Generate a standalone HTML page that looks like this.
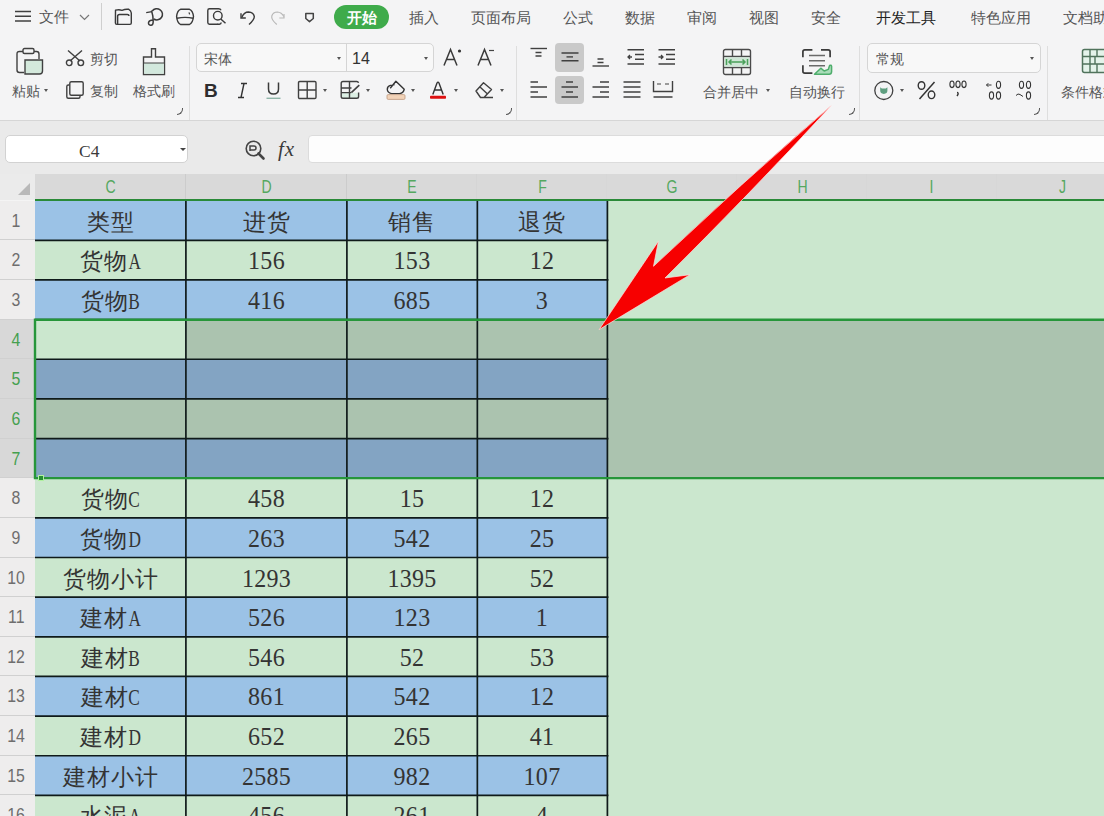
<!DOCTYPE html>
<html><head><meta charset="utf-8">
<style>
html,body{margin:0;padding:0;}
body{width:1104px;height:816px;overflow:hidden;position:relative;background:#f4f4f4;font-family:"Liberation Sans",sans-serif;}
.a{position:absolute;}
.t{position:absolute;white-space:nowrap;font-size:14.5px;line-height:16px;color:#555;}
svg{position:absolute;overflow:visible;}
#ribbon{position:absolute;left:0;top:0;width:1104px;height:120px;background:#f4f4f5;border-bottom:1px solid #d6d6d6;}
#fbar{position:absolute;left:0;top:121px;width:1104px;height:54px;background:#eaeaea;}
#namebox{position:absolute;left:5px;top:135px;width:183px;height:28px;background:#fff;border:1px solid #d2d2d2;border-radius:5px;box-sizing:border-box;}
#finput{position:absolute;left:308px;top:135px;width:800px;height:28px;background:#fdfdfd;border:1px solid #dcdcdc;border-radius:4px;box-sizing:border-box;}
#grid{position:absolute;left:0;top:0;width:1104px;height:816px;}
.cell{position:absolute;box-sizing:border-box;text-align:center;font-family:"Liberation Serif",serif;font-size:24px;color:#343434;line-height:40px;padding-top:1px;}
.hl{position:absolute;left:35px;width:573px;height:2px;background:#1c2a36;}
.vl{position:absolute;top:200px;height:640px;width:2px;background:#1c2a36;}
.rh{position:absolute;left:0;width:35px;background:#eeeded;text-align:center;font-size:18px;color:#6e6e6e;line-height:40px;box-sizing:border-box;padding-right:3px;}
.rh.sel{background:#d8d8d8;color:#45a04f;}
.rhl{position:absolute;left:0;width:35px;height:1px;background:#d0d0d0;}
.ch{position:absolute;top:174px;height:26px;background:#d9d9d9;text-align:center;font-size:18px;color:#55a85f;line-height:26px;}
.chl{position:absolute;top:175px;height:25px;width:1px;background:#c6c6c6;}
#corner{position:absolute;left:0;top:174px;width:35px;height:26px;background:#ebebeb;}
#selbox{position:absolute;left:35px;top:318px;width:1080px;height:161px;box-sizing:border-box;border:2px solid #2e9a3a;}
#hdrline{position:absolute;left:35px;top:199px;width:1069px;height:2px;background:#2f8a3c;}
.sep{position:absolute;width:1px;background:#dedede;}
.dd{position:absolute;width:0;height:0;border-left:3px solid transparent;border-right:3px solid transparent;border-top:3px solid #555;}
.launch{position:absolute;width:5px;height:6px;border-right:1.3px solid #555;border-bottom:1.3px solid #555;border-bottom-right-radius:6px;}
.cj{font-size:22.5px;letter-spacing:1px;}
.lt{display:inline-block;transform:scaleX(0.72);margin:0 -2.5px;}
.nm{display:inline-block;transform:scaleY(1.07);transform-origin:50% 78%;letter-spacing:0.3px;}
.chs{display:inline-block;transform:scaleX(0.78);}
.rhs{display:inline-block;transform:scaleX(0.88);}
</style></head><body>
<div id="ribbon"></div>
<!-- top row -->
<svg style="left:14px;top:10px" width="18" height="13"><path d="M1 1.5H17M1 6.3H17M1 11H17" stroke="#404040" stroke-width="1.4"/></svg>
<div class="t" style="left:39px;top:9px;font-size:15px">文件</div>
<svg style="left:79px;top:14px" width="11" height="7"><path d="M1 1L5.5 5.5L10 1" fill="none" stroke="#777" stroke-width="1.2"/></svg>
<div class="sep" style="left:101px;top:3px;height:27px;background:#cfcfcf"></div>
<svg style="left:113px;top:7px" width="20" height="19"><path d="M2.5 3.2Q6 2.2 9 3.3Q12.5 1.8 15.8 2.3Q18 3.5 18.3 6V16Q18.3 17.4 16.9 17.4H3.8Q2.4 17.4 2.4 16Z" fill="none" stroke="#3a3a3a" stroke-width="1.4" stroke-linejoin="round"/><path d="M4.6 17V9.3Q4.6 7.5 6.5 7.5H14.3Q16 7.5 16 9" fill="none" stroke="#3a3a3a" stroke-width="1.5"/></svg>
<svg style="left:145px;top:8px" width="20" height="19"><path d="M1.2 4.6L7 3.6" stroke="#3a3a3a" stroke-width="1.4"/><path d="M7.2 3A5.7 5.6 0 1 1 8.6 11" fill="none" stroke="#3a3a3a" stroke-width="1.5"/><path d="M6.5 2.5Q8.3 8 8.2 13.5Q8.2 17.6 5.6 17.2Q3 16.8 3.6 14.3Q4.4 12 8 12" fill="none" stroke="#3a3a3a" stroke-width="1.5"/></svg>
<svg style="left:175px;top:8px" width="20" height="18"><path d="M5.5 1.3H14.5Q17.8 2.5 18.5 8.5Q18 14.5 14.5 16.5H5.5Q2 14.5 1.6 8.5Q2.2 2.5 5.5 1.3Z" fill="none" stroke="#3a3a3a" stroke-width="1.4" stroke-linejoin="round"/><path d="M2 10.2Q10 8.6 18.2 10.2" fill="none" stroke="#3a3a3a" stroke-width="1.4"/><path d="M14 4.3L14.6 6.3" stroke="#3a3a3a" stroke-width="1.2"/></svg>
<svg style="left:206px;top:7px" width="21" height="19"><path d="M11.5 17.2H3.5Q1.8 17.2 1.8 15.5V3.5Q1.8 1.8 3.5 1.8H12.5Q14.5 1.8 15 3.2" fill="none" stroke="#3a3a3a" stroke-width="1.4"/><circle cx="11.8" cy="8.7" r="4.3" fill="none" stroke="#3a3a3a" stroke-width="1.4"/><path d="M14.8 12L19.5 16.2" stroke="#3a3a3a" stroke-width="1.5"/><path d="M11 17.2H13.5Q15 17.2 15.2 15.5" fill="none" stroke="#3a3a3a" stroke-width="1.5"/></svg>
<svg style="left:239px;top:9px" width="18" height="17"><path d="M2.8 8.5Q5 3 9.5 3Q14.5 3.2 15.3 7.5Q15.5 10.5 10 15.5" fill="none" stroke="#3a3a3a" stroke-width="1.4"/><path d="M2 4.3V9H6.8" fill="none" stroke="#3a3a3a" stroke-width="1.4"/></svg>
<svg style="left:269px;top:9px" width="18" height="17"><path d="M7.8 15.5Q2 10.5 2.8 7Q4 3 8.5 3Q12.5 3.2 14.8 7.5" fill="none" stroke="#b8b8b8" stroke-width="1.2"/><path d="M15 5V9H10.3" fill="none" stroke="#b8b8b8" stroke-width="1.2"/></svg>
<svg style="left:304px;top:12px" width="11" height="11"><path d="M1.8 1.5H9.3V6.5L5.5 9.6L1.8 6.5Z" fill="none" stroke="#444" stroke-width="1.5" stroke-linejoin="round"/></svg>
<div class="a" style="left:334px;top:5px;width:55px;height:24px;border-radius:12px;background:#3fab4b"></div>
<div class="t" style="left:347px;top:10px;font-size:14.5px;color:#fff;font-weight:bold">开始</div>
<div class="t" style="left:409px;top:10px">插入</div>
<div class="t" style="left:471px;top:10px">页面布局</div>
<div class="t" style="left:563px;top:10px">公式</div>
<div class="t" style="left:625px;top:10px">数据</div>
<div class="t" style="left:687px;top:10px">审阅</div>
<div class="t" style="left:749px;top:10px">视图</div>
<div class="t" style="left:811px;top:10px">安全</div>
<div class="t" style="left:876px;top:10px;color:#222">开发工具</div>
<div class="t" style="left:971px;top:10px">特色应用</div>
<div class="t" style="left:1063px;top:10px">文档助手</div>

<!-- clipboard group -->
<svg style="left:15px;top:47px" width="30" height="29"><path d="M8 4.5H4.5Q2 4.5 2 7V23Q2 25.5 4.5 25.5H9" fill="none" stroke="#404040" stroke-width="1.4"/><path d="M19 4.5H21.5Q24 4.5 24 7V12" fill="none" stroke="#404040" stroke-width="1.4"/><rect x="8" y="1.5" width="11" height="5" rx="1.5" fill="#f4f4f5" stroke="#404040" stroke-width="1.4"/><path d="M10 13H27.5V24Q27.5 27 24.5 27H10Z" fill="#d4e9dc" stroke="#404040" stroke-width="1.4"/></svg>
<div class="t" style="left:12px;top:83px;font-size:14px">粘贴</div>
<div class="dd" style="left:44px;top:89px;border-width:3px 2.5px 0 2.5px"></div>
<svg style="left:65px;top:49px" width="20" height="18"><path d="M3 1.5L15 12M17 1.5L5 12" stroke="#404040" stroke-width="1.4"/><circle cx="4.2" cy="13.8" r="2.8" fill="none" stroke="#404040" stroke-width="1.4"/><circle cx="15.8" cy="13.8" r="2.8" fill="none" stroke="#404040" stroke-width="1.4"/></svg>
<div class="t" style="left:90px;top:51px;font-size:14px">剪切</div>
<svg style="left:65px;top:80px" width="20" height="20"><path d="M4.5 5H3.3Q1.8 5 1.8 6.5V16.7Q1.8 18.2 3.3 18.2H13.5Q15 18.2 15 16.7V15.5" fill="none" stroke="#404040" stroke-width="1.4"/><rect x="4.8" y="1.8" width="13.4" height="13.4" rx="1.5" fill="none" stroke="#404040" stroke-width="1.4"/></svg>
<div class="t" style="left:90px;top:83px;font-size:14px">复制</div>
<svg style="left:141px;top:47px" width="27" height="30"><path d="M10.5 1.8H14.5V10H23.5V27.5H2.5V10H10.5Z" fill="none" stroke="#404040" stroke-width="1.4"/><path d="M3.2 16H22.8V26.8H3.2Z" fill="#d2e8dd"/><path d="M2.5 16H23.5" stroke="#404040" stroke-width="1"/></svg>
<div class="t" style="left:133px;top:83px;font-size:14px">格式刷</div>
<div class="launch" style="left:177px;top:108px"></div>
<div class="sep" style="left:189px;top:46px;height:74px"></div>

<!-- font group -->
<div class="a" style="left:196px;top:43px;width:238px;height:29px;box-sizing:border-box;border:1px solid #d5d5d5;border-radius:5px;background:#f8f8f8"></div>
<div class="a" style="left:346px;top:44px;width:1px;height:27px;background:#d5d5d5"></div>
<div class="t" style="left:204px;top:51px;font-size:14px">宋体</div>
<div class="dd" style="left:337px;top:57px;border-width:3px 2.5px 0 2.5px"></div>
<div class="t" style="left:352px;top:51px;font-size:16px;color:#333">14</div>
<div class="dd" style="left:424px;top:57px;border-width:3px 2.5px 0 2.5px"></div>
<svg style="left:443px;top:48px" width="20" height="19"><path d="M1 17.5L7.5 1.5L14 17.5M3.5 11.5H11.5" fill="none" stroke="#3a3a3a" stroke-width="1.5"/><circle cx="16.5" cy="3" r="1.6" fill="#333"/></svg>
<svg style="left:477px;top:48px" width="18" height="19"><path d="M1 17.5L7.5 1.5L14 17.5M3.5 11.5H11.5" fill="none" stroke="#3a3a3a" stroke-width="1.5"/><path d="M12 2.5H17" stroke="#444" stroke-width="1.2"/></svg>
<div class="t" style="left:204px;top:81px;font-size:19px;line-height:20px;font-weight:bold;color:#2e2e2e">B</div>
<svg style="left:237px;top:82px" width="11" height="17"><path d="M4 1.5H10M1 15.5H7M7 1.5L4 15.5" stroke="#333" stroke-width="1.4"/></svg>
<svg style="left:265px;top:81px" width="17" height="19"><path d="M3.5 1.5V8Q3.5 13 8.5 13Q13.5 13 13.5 8V1.5" fill="none" stroke="#3a3a3a" stroke-width="1.5"/><path d="M1.5 17.3H15.5" stroke="#8fb5a8" stroke-width="1.4"/></svg>
<svg style="left:297px;top:80px" width="21" height="20"><rect x="1.5" y="1.5" width="17.5" height="17" rx="1.2" fill="none" stroke="#404040" stroke-width="1.4"/><path d="M10.2 1.5V18.5M1.5 10H19" stroke="#404040" stroke-width="1.4"/></svg>
<div class="dd" style="left:323px;top:89px;border-width:3px 2.5px 0 2.5px"></div>
<svg style="left:339px;top:80px" width="22" height="20"><path d="M2.2 12.7H19.6V16.5Q19.6 18.3 17.8 18.3H4Q2.2 18.3 2.2 16.5Z" fill="#dcefe4"/><path d="M19.6 12.5V16.5Q19.6 18.3 17.8 18.3H4Q2.2 18.3 2.2 16.5V3.3Q2.2 1.5 4 1.5H17.8Q19.2 1.5 19.5 2.8M2.2 8H12.5M2.2 12.6H12M10.5 1.5V18.3" fill="none" stroke="#404040" stroke-width="1.4"/><path d="M20.3 5.2L12.3 12.6" stroke="#404040" stroke-width="1.6"/></svg>
<div class="dd" style="left:366px;top:89px;border-width:3px 2.5px 0 2.5px"></div>
<svg style="left:385px;top:80px" width="22" height="21"><path d="M5.2 8.3L10.9 1.2L19.2 9.3Q18.6 12.8 14.5 13.6H6.5Q2.6 12.8 2.3 9.5Q2.2 6.2 5.3 5.4L9.6 4.6" fill="none" stroke="#333" stroke-width="1.4" stroke-linejoin="round"/><rect x="2" y="14.6" width="18" height="4.8" rx="1.2" fill="#f2d3b8" stroke="#c3a088" stroke-width="0.9"/></svg>
<div class="dd" style="left:411px;top:89px;border-width:3px 2.5px 0 2.5px"></div>
<svg style="left:429px;top:80px" width="18" height="21"><path d="M3.8 14.5L8 3Q9 1.3 10 3L14.2 14.5M5.5 10H12.5" fill="none" stroke="#333" stroke-width="1.4"/><rect x="1" y="15.8" width="16" height="3" rx="0.8" fill="#dd1111"/></svg>
<div class="dd" style="left:454px;top:89px;border-width:3px 2.5px 0 2.5px"></div>
<svg style="left:474px;top:80px" width="20" height="19"><path d="M9.5 17.5H19M2 11L9.5 2.8L17.5 9.5L10 17.5H6.5Z M6 7L13.5 14" fill="none" stroke="#404040" stroke-width="1.4" stroke-linejoin="round"/></svg>
<div class="dd" style="left:500px;top:89px;border-width:3px 2.5px 0 2.5px"></div>
<div class="launch" style="left:506px;top:108px"></div>
<div class="sep" style="left:516px;top:46px;height:74px"></div>

<!-- align group -->
<div class="a" style="left:555px;top:43px;width:29px;height:29px;border-radius:4px;background:#c9c9c9"></div>
<div class="a" style="left:555px;top:76px;width:29px;height:28px;border-radius:4px;background:#c9c9c9"></div>
<svg style="left:529px;top:47px" width="20" height="12"><path d="M1.5 1.5H18" stroke="#404040" stroke-width="1.4"/><path d="M6.5 5.5H12.5M6.5 9H12.5" stroke="#404040" stroke-width="1.4"/></svg>
<svg style="left:560px;top:51px" width="20" height="12"><path d="M1.5 2H18.5M1.5 9.8H18.5" stroke="#404040" stroke-width="1.4"/><path d="M6.5 5.9H13" stroke="#404040" stroke-width="1.4"/></svg>
<svg style="left:591px;top:56px" width="20" height="12"><path d="M1.5 10H18" stroke="#404040" stroke-width="1.4"/><path d="M6.5 3H12.5M6.5 6.5H12.5" stroke="#404040" stroke-width="1.4"/></svg>
<svg style="left:626px;top:48px" width="20" height="18"><path d="M1.5 1.8H18M1.5 16H18M9 6.5H18M9 11.3H18" stroke="#404040" stroke-width="1.4"/><path d="M6 9H2M4 7L2 9L4 11" fill="none" stroke="#404040" stroke-width="1.3"/></svg>
<svg style="left:657px;top:48px" width="20" height="18"><path d="M1.5 1.8H18M1.5 16H18M9 6.5H18M9 11.3H18" stroke="#404040" stroke-width="1.4"/><path d="M1.5 9H6M4 7L6 9L4 11" fill="none" stroke="#404040" stroke-width="1.3"/></svg>
<svg style="left:529px;top:80px" width="20" height="19"><path d="M1.5 2H9M1.5 7H18M1.5 12H9M1.5 17H18" stroke="#404040" stroke-width="1.4"/></svg>
<svg style="left:560px;top:80px" width="20" height="19"><path d="M6 2H13M1.5 7H18M6 12H13M1.5 17H18" stroke="#404040" stroke-width="1.4"/></svg>
<svg style="left:591px;top:80px" width="20" height="19"><path d="M9 2H18M1.5 7H18M9 12H18M1.5 17H18" stroke="#404040" stroke-width="1.4"/></svg>
<svg style="left:622px;top:80px" width="20" height="19"><path d="M1.5 2H18.5M1.5 7H18.5M1.5 12H18.5M1.5 17H18.5" stroke="#404040" stroke-width="1.4"/></svg>
<svg style="left:652px;top:80px" width="22" height="19"><path d="M1.5 1V11.5H20.5V1M1.5 17H20.5" fill="none" stroke="#404040" stroke-width="1.4"/><path d="M5 4H9M13 4H17" stroke="#404040" stroke-width="1.2"/></svg>

<!-- merge / wrap -->
<svg style="left:722px;top:48px" width="30" height="28"><rect x="1.5" y="1.5" width="27" height="25" rx="2" fill="none" stroke="#4a4a4a" stroke-width="1.4"/><path d="M1.5 8.5H28.5M1.5 19.5H28.5M10.5 1.5V8.5M19.5 1.5V8.5M10.5 19.5V26.5M19.5 19.5V26.5" stroke="#4a4a4a" stroke-width="1.4"/><rect x="2.5" y="9.3" width="25" height="9.4" fill="#cfe6d6"/><path d="M7 14H23M9.5 11.5L7 14L9.5 16.5M20.5 11.5L23 14L20.5 16.5" fill="none" stroke="#4aa05a" stroke-width="1.5"/><path d="M4.5 11V17M25.5 11V17" stroke="#4aa05a" stroke-width="1.5"/></svg>
<div class="t" style="left:703px;top:84px;font-size:14px">合并居中</div>
<div class="dd" style="left:766px;top:89px;border-width:3px 2.5px 0 2.5px"></div>
<svg style="left:801px;top:48px" width="32" height="28"><path d="M11.4 1.9H3.8Q1.9 1.9 1.9 3.8V9.3M20 1.9H27.2Q29.1 1.9 29.1 3.8V9.3M1.9 17.2V23.2Q1.9 25.1 3.8 25.1H11.4" fill="none" stroke="#3a3a3a" stroke-width="1.7"/><path d="M8 7.6H24M8 12.7H24M8 17.8H24" stroke="#6a6a6a" stroke-width="1.5"/><path d="M13.5 26.3L19.8 20.2L23.2 23L27.3 21.4L28.6 17.4Q30.2 16.6 30.6 18.3V23.8Q30.4 26.3 28.2 26.3Z" fill="#a9dcb9" stroke="#4ead6c" stroke-width="1.5" stroke-linejoin="round"/></svg>
<div class="t" style="left:789px;top:84px;font-size:14px">自动换行</div>
<div class="launch" style="left:849px;top:108px"></div>
<div class="sep" style="left:859px;top:46px;height:74px"></div>

<!-- number group -->
<div class="a" style="left:867px;top:43px;width:174px;height:30px;box-sizing:border-box;border:1px solid #d5d5d5;border-radius:5px;background:#f8f8f8"></div>
<div class="t" style="left:876px;top:51px;font-size:14px">常规</div>
<div class="dd" style="left:1030px;top:57px;border-width:3px 2.5px 0 2.5px"></div>
<svg style="left:873px;top:80px" width="22" height="22"><circle cx="10.8" cy="10.5" r="9" fill="none" stroke="#404040" stroke-width="1.3"/><path d="M7.2 7.2L8.8 8.6H12.8L14.4 7.2V10.6Q14.4 13.9 10.8 13.9Q7.2 13.9 7.2 10.6Z" fill="#5f9f80"/></svg>
<div class="dd" style="left:900px;top:89px;border-width:3px 2.5px 0 2.5px"></div>
<svg style="left:917px;top:81px" width="20" height="19"><ellipse cx="4.5" cy="4.5" rx="3.3" ry="3.8" fill="none" stroke="#333" stroke-width="1.4"/><ellipse cx="14.5" cy="13.8" rx="3.3" ry="3.8" fill="none" stroke="#333" stroke-width="1.4"/><path d="M17.5 1L2.5 18" stroke="#333" stroke-width="1.5"/></svg>
<svg style="left:949px;top:80px" width="19" height="17"><g fill="none" stroke="#333" stroke-width="1.1"><ellipse cx="3" cy="4.3" rx="2.1" ry="3.3"/><ellipse cx="9" cy="4.3" rx="2.1" ry="3.3"/><ellipse cx="15" cy="4.3" rx="2.1" ry="3.3"/></g><path d="M8 12.5Q9.5 12.5 9 14.5L8 16" fill="none" stroke="#333" stroke-width="1.4"/></svg>
<svg style="left:985px;top:80px" width="18" height="21"><path d="M1.5 5H6.5M3.3 3.2L1.5 5L3.3 6.8" fill="none" stroke="#333" stroke-width="1"/><g fill="none" stroke="#333" stroke-width="1.1"><ellipse cx="13.5" cy="4.8" rx="2.1" ry="3.6"/><ellipse cx="6.5" cy="15.5" rx="2.1" ry="3.6"/><ellipse cx="13.5" cy="15.5" rx="2.1" ry="3.6"/></g></svg>
<svg style="left:1015px;top:80px" width="18" height="21"><g fill="none" stroke="#333" stroke-width="1.1"><ellipse cx="6.5" cy="4.8" rx="2.1" ry="3.6"/><ellipse cx="13.5" cy="4.8" rx="2.1" ry="3.6"/><ellipse cx="13.5" cy="15.5" rx="2.1" ry="3.6"/></g><path d="M1 15.5Q3 13 5 14.5L8 16.5" fill="none" stroke="#333" stroke-width="1"/></svg>
<div class="launch" style="left:1034px;top:108px"></div>
<div class="sep" style="left:1047px;top:46px;height:74px"></div>

<!-- cond format -->
<svg style="left:1081px;top:48px" width="30" height="26"><rect x="1.5" y="1.5" width="27" height="23" rx="2" fill="#e4f3ea" stroke="#50735c" stroke-width="1.5"/><path d="M1.5 8.5H28.5M1.5 16H28.5M9 1.5V24.5M16 1.5V8.5M14 8.5V16M16 16V24.5" stroke="#50735c" stroke-width="1.4"/></svg>
<div class="t" style="left:1061px;top:84px;font-size:14px">条件格式</div>

<div id="fbar"></div>
<div id="namebox"></div>
<div id="finput"></div>
<div class="t" style="left:79px;top:141px;font-family:'Liberation Serif',serif;font-size:17.5px;line-height:20px;color:#3a3a3a">C4</div>
<div class="dd" style="left:180px;top:148px;border-top-color:#444"></div>
<svg style="left:245px;top:140px" width="22" height="20" viewBox="0 0 22 20"><circle cx="8.5" cy="8.5" r="7.3" fill="none" stroke="#444" stroke-width="1.6"/><path d="M5 11V6h4a2 2 0 0 1 0 4H5" fill="none" stroke="#444" stroke-width="1.5"/><path d="M13.5 13.5l5 5" stroke="#444" stroke-width="2.6" stroke-linecap="round"/></svg>
<div class="t" style="left:278px;top:138px;font-family:'Liberation Serif',serif;font-style:italic;font-size:21px;line-height:22px;letter-spacing:1px;color:#3a3a3a">fx</div>
<div id="corner"></div>
<svg style="left:17px;top:182px" width="14" height="14"><path d="M13 1V13H1Z" fill="#b9b9b9"/></svg>
<div id="grid">
<div style="position:absolute;left:607px;top:200px;right:0;bottom:0;background:#cbe7ce"></div>
<div style="position:absolute;left:607px;top:320px;right:0;height:158px;background:#abc3af"></div>
<div class="cell" style="left:35px;top:201px;width:151px;height:39px;background:#9bc2e6"><span class="cj">类型</span></div>
<div class="cell" style="left:186px;top:201px;width:161px;height:39px;background:#9bc2e6"><span class="cj">进货</span></div>
<div class="cell" style="left:347px;top:201px;width:130px;height:39px;background:#9bc2e6"><span class="cj">销售</span></div>
<div class="cell" style="left:477px;top:201px;width:130px;height:39px;background:#9bc2e6"><span class="cj">退货</span></div>
<div class="cell" style="left:35px;top:240px;width:151px;height:40px;background:#cbe7ce"><span class="cj">货物</span><span class="lt">A</span></div>
<div class="cell" style="left:186px;top:240px;width:161px;height:40px;background:#cbe7ce"><span class="nm">156</span></div>
<div class="cell" style="left:347px;top:240px;width:130px;height:40px;background:#cbe7ce"><span class="nm">153</span></div>
<div class="cell" style="left:477px;top:240px;width:130px;height:40px;background:#cbe7ce"><span class="nm">12</span></div>
<div class="cell" style="left:35px;top:280px;width:151px;height:40px;background:#9bc2e6"><span class="cj">货物</span><span class="lt">B</span></div>
<div class="cell" style="left:186px;top:280px;width:161px;height:40px;background:#9bc2e6"><span class="nm">416</span></div>
<div class="cell" style="left:347px;top:280px;width:130px;height:40px;background:#9bc2e6"><span class="nm">685</span></div>
<div class="cell" style="left:477px;top:280px;width:130px;height:40px;background:#9bc2e6"><span class="nm">3</span></div>
<div class="cell" style="left:35px;top:320px;width:151px;height:39px;background:#cbe7ce"></div>
<div class="cell" style="left:186px;top:320px;width:161px;height:39px;background:#abc3af"></div>
<div class="cell" style="left:347px;top:320px;width:130px;height:39px;background:#abc3af"></div>
<div class="cell" style="left:477px;top:320px;width:130px;height:39px;background:#abc3af"></div>
<div class="cell" style="left:35px;top:359px;width:151px;height:40px;background:#83a4c3"></div>
<div class="cell" style="left:186px;top:359px;width:161px;height:40px;background:#83a4c3"></div>
<div class="cell" style="left:347px;top:359px;width:130px;height:40px;background:#83a4c3"></div>
<div class="cell" style="left:477px;top:359px;width:130px;height:40px;background:#83a4c3"></div>
<div class="cell" style="left:35px;top:399px;width:151px;height:40px;background:#abc3af"></div>
<div class="cell" style="left:186px;top:399px;width:161px;height:40px;background:#abc3af"></div>
<div class="cell" style="left:347px;top:399px;width:130px;height:40px;background:#abc3af"></div>
<div class="cell" style="left:477px;top:399px;width:130px;height:40px;background:#abc3af"></div>
<div class="cell" style="left:35px;top:439px;width:151px;height:39px;background:#83a4c3"></div>
<div class="cell" style="left:186px;top:439px;width:161px;height:39px;background:#83a4c3"></div>
<div class="cell" style="left:347px;top:439px;width:130px;height:39px;background:#83a4c3"></div>
<div class="cell" style="left:477px;top:439px;width:130px;height:39px;background:#83a4c3"></div>
<div class="cell" style="left:35px;top:478px;width:151px;height:40px;background:#cbe7ce"><span class="cj">货物</span><span class="lt">C</span></div>
<div class="cell" style="left:186px;top:478px;width:161px;height:40px;background:#cbe7ce"><span class="nm">458</span></div>
<div class="cell" style="left:347px;top:478px;width:130px;height:40px;background:#cbe7ce"><span class="nm">15</span></div>
<div class="cell" style="left:477px;top:478px;width:130px;height:40px;background:#cbe7ce"><span class="nm">12</span></div>
<div class="cell" style="left:35px;top:518px;width:151px;height:40px;background:#9bc2e6"><span class="cj">货物</span><span class="lt">D</span></div>
<div class="cell" style="left:186px;top:518px;width:161px;height:40px;background:#9bc2e6"><span class="nm">263</span></div>
<div class="cell" style="left:347px;top:518px;width:130px;height:40px;background:#9bc2e6"><span class="nm">542</span></div>
<div class="cell" style="left:477px;top:518px;width:130px;height:40px;background:#9bc2e6"><span class="nm">25</span></div>
<div class="cell" style="left:35px;top:558px;width:151px;height:39px;background:#cbe7ce"><span class="cj">货物小计</span></div>
<div class="cell" style="left:186px;top:558px;width:161px;height:39px;background:#cbe7ce"><span class="nm">1293</span></div>
<div class="cell" style="left:347px;top:558px;width:130px;height:39px;background:#cbe7ce"><span class="nm">1395</span></div>
<div class="cell" style="left:477px;top:558px;width:130px;height:39px;background:#cbe7ce"><span class="nm">52</span></div>
<div class="cell" style="left:35px;top:597px;width:151px;height:40px;background:#9bc2e6"><span class="cj">建材</span><span class="lt">A</span></div>
<div class="cell" style="left:186px;top:597px;width:161px;height:40px;background:#9bc2e6"><span class="nm">526</span></div>
<div class="cell" style="left:347px;top:597px;width:130px;height:40px;background:#9bc2e6"><span class="nm">123</span></div>
<div class="cell" style="left:477px;top:597px;width:130px;height:40px;background:#9bc2e6"><span class="nm">1</span></div>
<div class="cell" style="left:35px;top:637px;width:151px;height:39px;background:#cbe7ce"><span class="cj">建材</span><span class="lt">B</span></div>
<div class="cell" style="left:186px;top:637px;width:161px;height:39px;background:#cbe7ce"><span class="nm">546</span></div>
<div class="cell" style="left:347px;top:637px;width:130px;height:39px;background:#cbe7ce"><span class="nm">52</span></div>
<div class="cell" style="left:477px;top:637px;width:130px;height:39px;background:#cbe7ce"><span class="nm">53</span></div>
<div class="cell" style="left:35px;top:676px;width:151px;height:40px;background:#9bc2e6"><span class="cj">建材</span><span class="lt">C</span></div>
<div class="cell" style="left:186px;top:676px;width:161px;height:40px;background:#9bc2e6"><span class="nm">861</span></div>
<div class="cell" style="left:347px;top:676px;width:130px;height:40px;background:#9bc2e6"><span class="nm">542</span></div>
<div class="cell" style="left:477px;top:676px;width:130px;height:40px;background:#9bc2e6"><span class="nm">12</span></div>
<div class="cell" style="left:35px;top:716px;width:151px;height:40px;background:#cbe7ce"><span class="cj">建材</span><span class="lt">D</span></div>
<div class="cell" style="left:186px;top:716px;width:161px;height:40px;background:#cbe7ce"><span class="nm">652</span></div>
<div class="cell" style="left:347px;top:716px;width:130px;height:40px;background:#cbe7ce"><span class="nm">265</span></div>
<div class="cell" style="left:477px;top:716px;width:130px;height:40px;background:#cbe7ce"><span class="nm">41</span></div>
<div class="cell" style="left:35px;top:756px;width:151px;height:39px;background:#9bc2e6"><span class="cj">建材小计</span></div>
<div class="cell" style="left:186px;top:756px;width:161px;height:39px;background:#9bc2e6"><span class="nm">2585</span></div>
<div class="cell" style="left:347px;top:756px;width:130px;height:39px;background:#9bc2e6"><span class="nm">982</span></div>
<div class="cell" style="left:477px;top:756px;width:130px;height:39px;background:#9bc2e6"><span class="nm">107</span></div>
<div class="cell" style="left:35px;top:795px;width:151px;height:40px;background:#cbe7ce"><span class="cj">水泥</span><span class="lt">A</span></div>
<div class="cell" style="left:186px;top:795px;width:161px;height:40px;background:#cbe7ce"><span class="nm">456</span></div>
<div class="cell" style="left:347px;top:795px;width:130px;height:40px;background:#cbe7ce"><span class="nm">261</span></div>
<div class="cell" style="left:477px;top:795px;width:130px;height:40px;background:#cbe7ce"><span class="nm">4</span></div>
<svg style="left:0;top:0" width="1104" height="816"><g stroke="#0f1a1a" stroke-width="1.7"><line x1="35" y1="240.30" x2="608.4" y2="240.30"/><line x1="35" y1="279.95" x2="608.4" y2="279.95"/><line x1="35" y1="319.60" x2="608.4" y2="319.60"/><line x1="35" y1="359.25" x2="608.4" y2="359.25"/><line x1="35" y1="398.90" x2="608.4" y2="398.90"/><line x1="35" y1="438.55" x2="608.4" y2="438.55"/><line x1="35" y1="478.20" x2="608.4" y2="478.20"/><line x1="35" y1="517.85" x2="608.4" y2="517.85"/><line x1="35" y1="557.50" x2="608.4" y2="557.50"/><line x1="35" y1="597.15" x2="608.4" y2="597.15"/><line x1="35" y1="636.80" x2="608.4" y2="636.80"/><line x1="35" y1="676.45" x2="608.4" y2="676.45"/><line x1="35" y1="716.10" x2="608.4" y2="716.10"/><line x1="35" y1="755.75" x2="608.4" y2="755.75"/><line x1="35" y1="795.40" x2="608.4" y2="795.40"/><line x1="35" y1="835.05" x2="608.4" y2="835.05"/><line x1="185.90" y1="200" x2="185.90" y2="816"/><line x1="346.90" y1="200" x2="346.90" y2="816"/><line x1="477.35" y1="200" x2="477.35" y2="816"/><line x1="607.40" y1="200" x2="607.40" y2="816"/></g></svg>
<div class="rh" style="top:201px;height:39px"><span class="rhs">1</span></div>
<div class="rhl" style="top:239px"></div>
<div class="rh" style="top:240px;height:40px"><span class="rhs">2</span></div>
<div class="rhl" style="top:279px"></div>
<div class="rh" style="top:280px;height:40px"><span class="rhs">3</span></div>
<div class="rhl" style="top:319px"></div>
<div class="rh sel" style="top:320px;height:39px"><span class="rhs">4</span></div>
<div class="rhl" style="top:358px"></div>
<div class="rh sel" style="top:359px;height:40px"><span class="rhs">5</span></div>
<div class="rhl" style="top:398px"></div>
<div class="rh sel" style="top:399px;height:40px"><span class="rhs">6</span></div>
<div class="rhl" style="top:438px"></div>
<div class="rh sel" style="top:439px;height:39px"><span class="rhs">7</span></div>
<div class="rhl" style="top:477px"></div>
<div class="rh" style="top:478px;height:40px"><span class="rhs">8</span></div>
<div class="rhl" style="top:517px"></div>
<div class="rh" style="top:518px;height:40px"><span class="rhs">9</span></div>
<div class="rhl" style="top:557px"></div>
<div class="rh" style="top:558px;height:39px"><span class="rhs">10</span></div>
<div class="rhl" style="top:596px"></div>
<div class="rh" style="top:597px;height:40px"><span class="rhs">11</span></div>
<div class="rhl" style="top:636px"></div>
<div class="rh" style="top:637px;height:39px"><span class="rhs">12</span></div>
<div class="rhl" style="top:675px"></div>
<div class="rh" style="top:676px;height:40px"><span class="rhs">13</span></div>
<div class="rhl" style="top:715px"></div>
<div class="rh" style="top:716px;height:40px"><span class="rhs">14</span></div>
<div class="rhl" style="top:755px"></div>
<div class="rh" style="top:756px;height:39px"><span class="rhs">15</span></div>
<div class="rhl" style="top:794px"></div>
<div class="rh" style="top:795px;height:40px"><span class="rhs">16</span></div>
<div class="rhl" style="top:834px"></div>
<div class="ch" style="left:35px;width:151px"><span class="chs">C</span></div>
<svg style="left:0;top:0" width="1104" height="816"><line x1="185.90" y1="174" x2="185.90" y2="199" stroke="#c4c4c4" stroke-width="1"/></svg>
<div class="ch" style="left:186px;width:161px"><span class="chs">D</span></div>
<svg style="left:0;top:0" width="1104" height="816"><line x1="346.90" y1="174" x2="346.90" y2="199" stroke="#c4c4c4" stroke-width="1"/></svg>
<div class="ch" style="left:347px;width:130px"><span class="chs">E</span></div>
<svg style="left:0;top:0" width="1104" height="816"><line x1="477.35" y1="174" x2="477.35" y2="199" stroke="#c4c4c4" stroke-width="1"/></svg>
<div class="ch" style="left:477px;width:130px"><span class="chs">F</span></div>
<svg style="left:0;top:0" width="1104" height="816"><line x1="607.40" y1="174" x2="607.40" y2="199" stroke="#c4c4c4" stroke-width="1"/></svg>
<div class="ch" style="left:607px;width:130px"><span class="chs">G</span></div>
<svg style="left:0;top:0" width="1104" height="816"><line x1="737.40" y1="174" x2="737.40" y2="199" stroke="#c4c4c4" stroke-width="1"/></svg>
<div class="ch" style="left:737px;width:130px"><span class="chs">H</span></div>
<svg style="left:0;top:0" width="1104" height="816"><line x1="867.40" y1="174" x2="867.40" y2="199" stroke="#c4c4c4" stroke-width="1"/></svg>
<div class="ch" style="left:867px;width:130px"><span class="chs">I</span></div>
<svg style="left:0;top:0" width="1104" height="816"><line x1="997.40" y1="174" x2="997.40" y2="199" stroke="#c4c4c4" stroke-width="1"/></svg>
<div class="ch" style="left:997px;width:130px"><span class="chs">J</span></div>
<svg style="left:0;top:0" width="1104" height="816"><line x1="1127.40" y1="174" x2="1127.40" y2="199" stroke="#c4c4c4" stroke-width="1"/></svg>
</div>
<svg style="left:0;top:0" width="1104" height="816"><line x1="35" y1="199.9" x2="1104" y2="199.9" stroke="#2a8a38" stroke-width="2"/><path d="M1104 319.7H35V478.1H1104" fill="none" stroke="#26963a" stroke-width="2.4"/></svg>
<div class="a" style="left:38px;top:475px;width:6px;height:6px;background:#258f34;border:1px solid #b0f0a0;box-sizing:border-box"></div>
<svg style="left:0;top:0" width="1104" height="816"><path d="M831.3,105.6 Q749.9,193.9 665,278 L690,274.7 L599.1,329.6 L658.4,241.3 L653.5,266.3 Q740.5,184.1 831.3,105.6Z" fill="#f70000" stroke="#ffe0e0" stroke-width="0.7" stroke-linejoin="miter"/></svg>
</body></html>
